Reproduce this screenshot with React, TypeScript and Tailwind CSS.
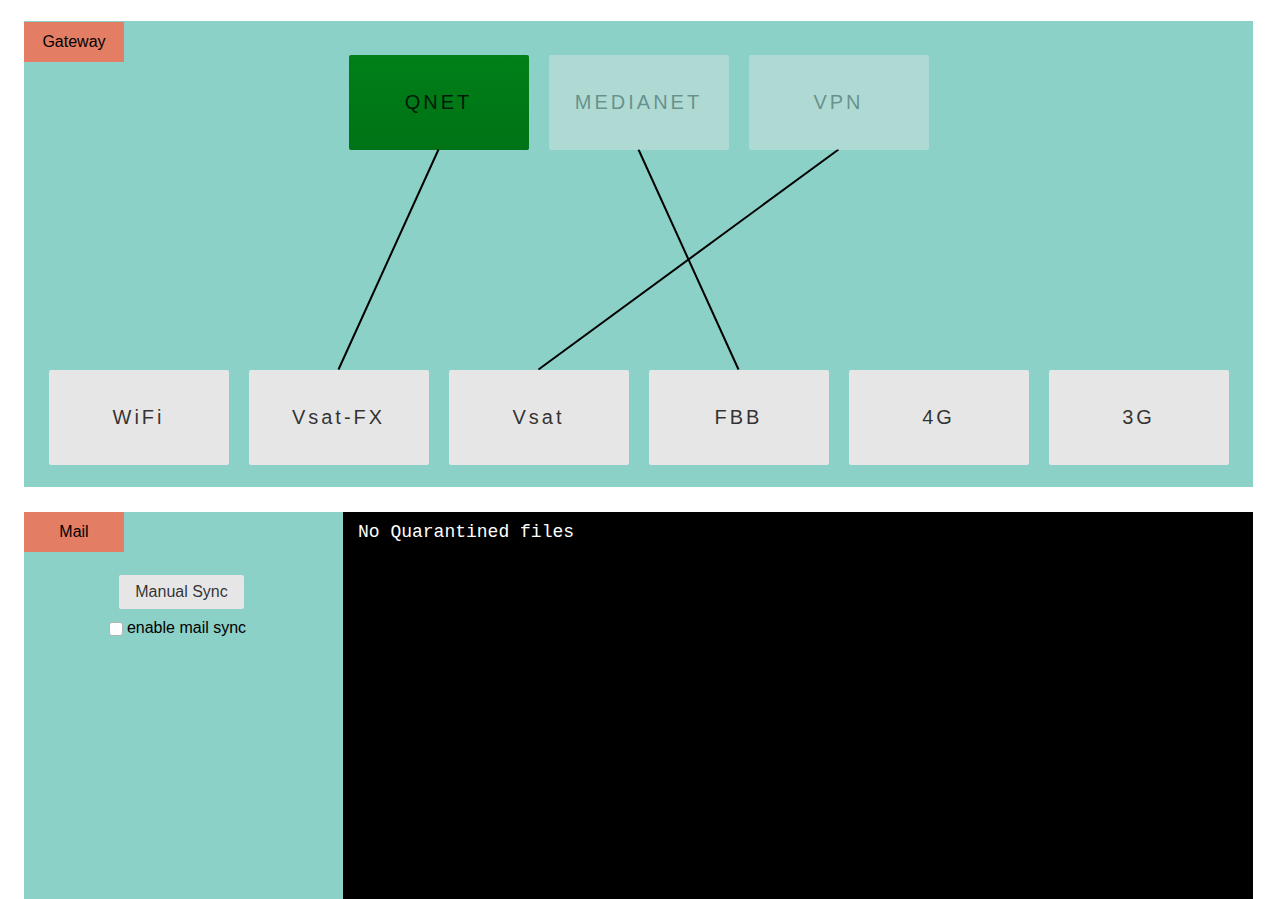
import { useState } from "react";

type NodeInfo = { name: string; active?: boolean; disabled?: boolean };

const networks: NodeInfo[] = [
  { name: "QNET", active: true },
  { name: "MEDIANET", disabled: true },
  { name: "VPN", disabled: true },
];

const links: NodeInfo[] = [
  { name: "WiFi" },
  { name: "Vsat-FX" },
  { name: "Vsat" },
  { name: "FBB" },
  { name: "4G" },
  { name: "3G" },
];

// Horizontal centres of the connected boxes: [network, link]
const routes: [number, number][] = [
  [389.5, 289.5],
  [589.5, 689.5],
  [789.5, 489.5],
];

function NodeButton({ name, active, disabled }: NodeInfo) {
  const look = active
    ? "bg-[#008018] bg-[linear-gradient(transparent,rgba(0,0,0,0.05)_40%,rgba(0,0,0,0.1))]"
    : "bg-[#e6e6e6]";
  return (
    <button
      type="button"
      disabled={disabled}
      className={`h-[95px] w-[180px] rounded-xs pb-0.5 text-xl tracking-[3px] text-black/80 disabled:opacity-40 ${look}`}
    >
      {name}
    </button>
  );
}

function Tag({ children }: { children: string }) {
  return (
    <h2 className="absolute left-0 flex h-10 w-[100px] items-center justify-center bg-[#e37e64]">
      {children}
    </h2>
  );
}

export default function App() {
  const [sync, setSync] = useState(false);
  return (
    <main className="flex min-h-screen flex-col gap-[25px] bg-white pt-[21px] pr-5 pl-6 font-['Liberation_Sans',Arial,sans-serif] text-base text-black">
      <section className="relative bg-[#8bd1c7] pt-px">
        <Tag>Gateway</Tag>
        <div className="overflow-x-auto">
          <div className="mx-auto flex w-max flex-col items-center pt-[33px] pb-[22px]">
            <div className="flex gap-5">
              {networks.map((n) => (
                <NodeButton key={n.name} {...n} />
              ))}
            </div>
            <svg width="1180" height="220" className="overflow-visible" aria-hidden="true">
              {routes.map(([from, to]) => (
                <line key={from} x1={from} y1="-0.5" x2={to} y2="219.5" stroke="black" strokeWidth="2" />
              ))}
            </svg>
            <div className="flex gap-5">
              {links.map((n) => (
                <NodeButton key={n.name} {...n} />
              ))}
            </div>
          </div>
        </div>
      </section>

      <section className="flex flex-1">
        <div className="relative w-[319px] shrink-0 bg-[#8bd1c7]">
          <Tag>Mail</Tag>
          <div className="flex flex-col items-center gap-[7px] pt-[63px] pr-1">
            <button type="button" className="rounded-xs bg-[#e6e6e6] px-4 py-[5px] text-black/80">
              Manual Sync
            </button>
            <label className="flex items-center gap-1 pr-2">
              <input
                type="checkbox"
                checked={sync}
                onChange={(e) => setSync(e.target.checked)}
                className="mt-px size-3.5 appearance-none rounded-[3px] border border-[#b4b4b4] bg-white checked:bg-[#3b82f6]"
              />
              enable mail sync
            </label>
          </div>
        </div>
        <div className="flex-1 bg-black px-[15px] py-2 font-['Liberation_Mono','Courier_New',monospace] text-lg leading-6 text-white">
          No Quarantined files
        </div>
      </section>
    </main>
  );
}
